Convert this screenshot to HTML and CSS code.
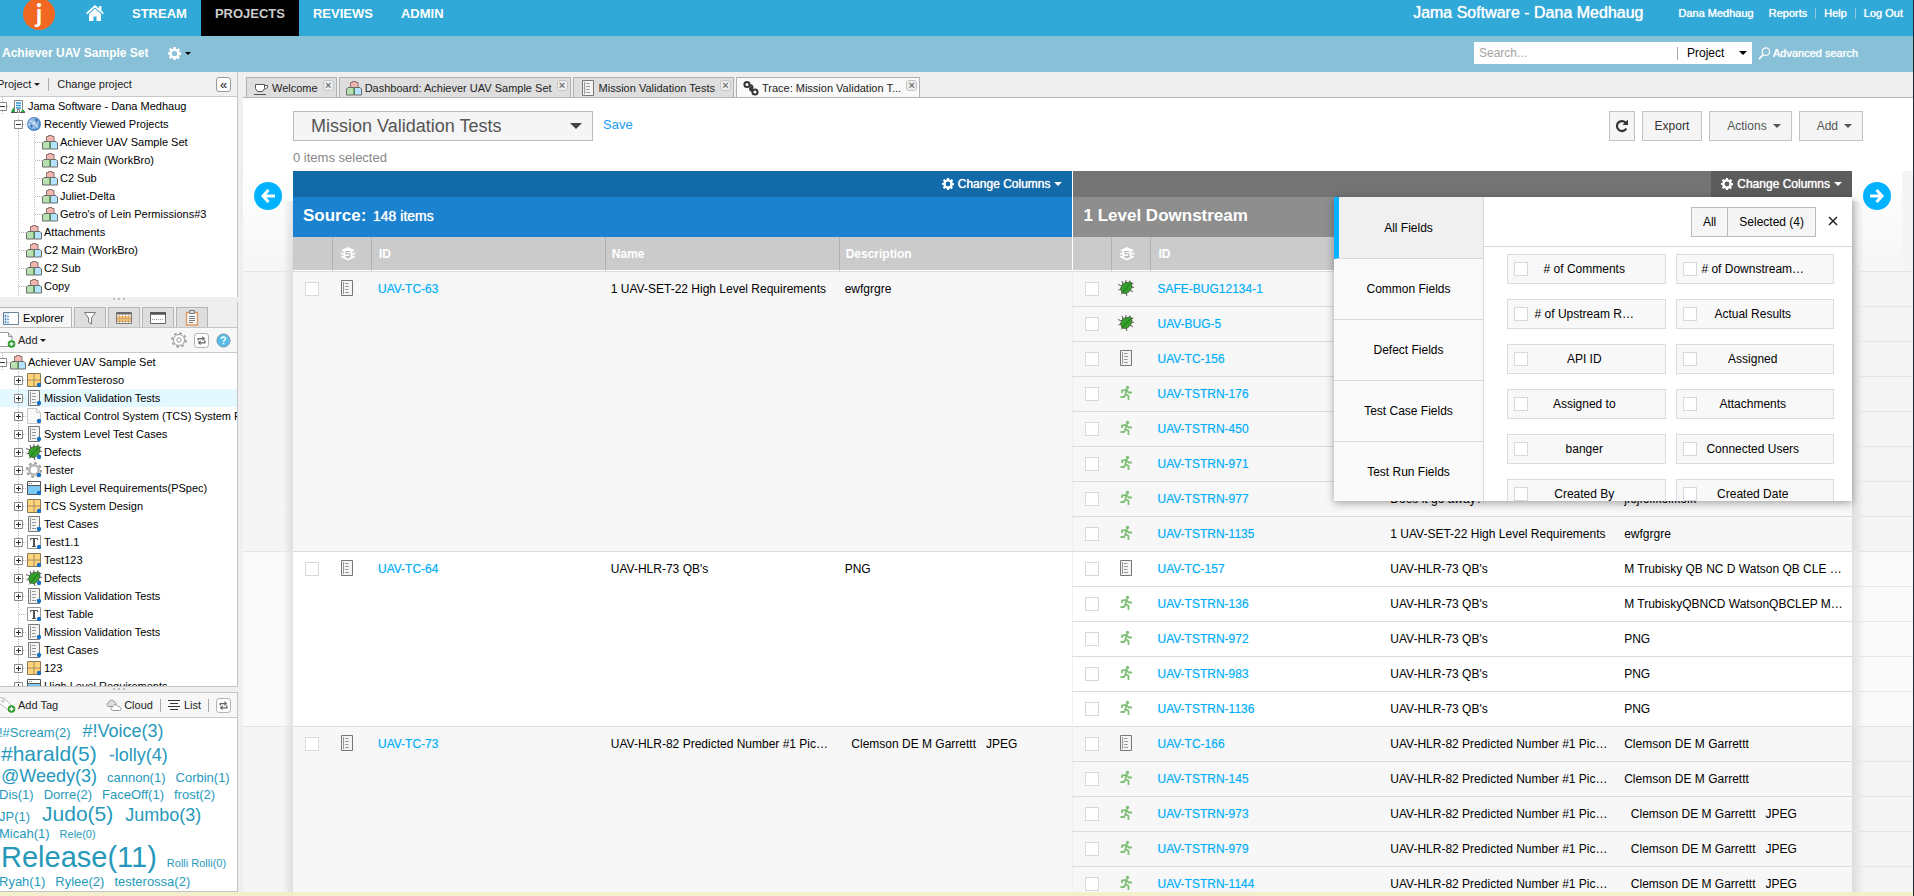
FILE: index.html
```
<!DOCTYPE html>
<html lang="en">
<head>
    <meta charset="UTF-8">
    <meta name="viewport" content="width=device-width, initial-scale=1.0">
    <title>Achiever UAV Sample Set - Trace View</title>
    <link rel="stylesheet" href="styles.css">
</head>
<body>
    <!-- icon sprite -->
    <svg class="sprite" aria-hidden="true">
        <symbol id="i-home" viewBox="0 0 18 16"><path fill="#fff" d="M9 0 0 8l1.200 1.300L9 2.500l7.800 6.800L18 8l-2.600-2.300V1h-2.300v2.600z"/><path fill="#fff" d="M9 3.800 3 9v7h4.500v-4.500h3V16H15V9z"/></symbol>
        <symbol id="i-gear" viewBox="0 0 14 14"><path fill="currentColor" fill-rule="evenodd" d="M5.800 0h2.400l.4 1.900 1.100.5 1.700-1.100 1.600 1.700-1 1.600.4 1.100 1.600.3v2.400l-1.800.3-.5 1.200 1.100 1.600-1.700 1.700-1.600-1.100-1.100.5L8.200 14H5.800l-.4-1.800-1.200-.5-1.600 1.100L1 11.100l1.100-1.600-.5-1.200L0 8V5.800l1.800-.4.4-1.100L1 2.800 2.700 1.200l1.600 1.100 1.100-.5zM7 4.200a2.800 2.800 0 1 0 0 5.600 2.800 2.800 0 0 0 0-5.600z"/></symbol>
        <symbol id="i-search" viewBox="0 0 14 14"><circle cx="8.500" cy="5" r="4" fill="none" stroke="#fff" stroke-width="1.300"/><path stroke="#fff" stroke-width="1.800" d="M5.500 8.200 1 13"/></symbol>
        <symbol id="i-blocks" viewBox="0 0 16 16"><path fill="#f3b6ae" stroke="#8c7270" d="M4.500 8V2.500h2v-1h3.500v1h2V8z"/><path fill="#b9e0b2" stroke="#6b6b6b" d="M.5 15V9L2 7.500h6V15z"/><path fill="#b3e3ff" stroke="#6b6b6b" d="M8.500 15V7.500H14L15.500 9v6z"/><path stroke="#4da24b" d="M8 8v6.500"/></symbol>
        <symbol id="i-building" viewBox="0 0 16 16"><path fill="#fff" stroke="#888" d="M4.500 14V2.500h8V14"/><path stroke="#2a9bd8" stroke-width="1.300" d="M6 5h5M6 7.500h5M6 10h5"/><path fill="#2f9e3c" d="M1 14l2.500-5L5 14zM11 14l1.500-3 3 3z"/><path stroke="#555" d="M1 14.500h14"/><path fill="#fff" stroke="#777" d="M7.500 14.500v-3h2v3"/></symbol>
        <symbol id="i-globe" viewBox="0 0 16 16"><circle cx="8" cy="8" r="7" fill="#4f86c6"/><circle cx="7.500" cy="7.500" r="5.500" fill="#8fb9e3"/><path fill="none" stroke="#e8f2fb" d="M4 4.500l4 2.500 4-3M8 7l-3 4M8 7l4 4.500M2.500 8.500h3"/><path fill="#3769ad" d="M9 2.500l3 1.500-2 3zM4 8l3 1-1.500 3z"/></symbol>
        <symbol id="i-doc" viewBox="0 0 16 16"><path fill="#f4f4f4" stroke="#777" d="M2.500.5h11v15h-11z"/><path stroke="#999" fill="none" d="M4.500 2v12M6 3.500h3.500M6 6.500h4M6 9.500h3.500M6 12.500h4"/></symbol>
        <symbol id="i-page" viewBox="0 0 16 16"><path fill="#f9f9f9" stroke="#c8c8c8" d="M1.500.5h9l4 4v11h-13zM10.500.5v4h4"/></symbol>
        <symbol id="i-grid" viewBox="0 0 16 16"><path fill="#fdd37c" stroke="#8a7a55" d="M1.500 1.500h13v13h-13z"/><path stroke="#a88f5c" d="M8 2v12M2 8h12"/></symbol>
        <symbol id="i-bug" viewBox="0 0 16 16"><path fill="none" stroke="#5a5a5a" d="M5 4 4 1M7.500 3 8 0M11 3.500 12 .500M12.500 4.500l3-1.500M13 7l3 .5M12 10l3 2M4 6 0 4.500M3.500 9l-3 1M5 12.500l-2 2M8 13l1 3"/><path fill="#33a02c" stroke="#47663f" d="M5 3.500l4-1 4-.5 1 4-1.500 4-3.500 3.500-5-.5-1.500-4.500z"/><path stroke="#1e6f1b" d="M5 12 12 4"/></symbol>
        <symbol id="i-cog" viewBox="0 0 16 16"><circle cx="8" cy="8" r="7" fill="none" stroke="#9b9b9b" stroke-width="2" stroke-dasharray="2.750 2.750"/><circle cx="8" cy="8" r="4.700" fill="#fff" stroke="#b5b5b5" stroke-width="2.500"/></symbol>
        <symbol id="i-settings" viewBox="0 0 16 16"><circle cx="8" cy="8" r="7" fill="none" stroke="#999" stroke-width="1.500" stroke-dasharray="2.750 2.750"/><circle cx="8" cy="8" r="5.500" fill="#fff" stroke="#999"/><circle cx="8" cy="8" r="2.200" fill="#fff" stroke="#999"/></symbol>
        <symbol id="i-window" viewBox="0 0 16 16"><path fill="#7ccbf7" stroke="#555" d="M1.500 1.500h13v13h-13z"/><path fill="#fff" d="M2 2h12v3H2z"/><path stroke="#555" d="M2 5.500h12"/><path stroke="#777" stroke-dasharray="1 1" d="M3 3.500h4"/></symbol>
        <symbol id="i-text" viewBox="0 0 16 16"><path fill="#fff" stroke="#999" d="M1.500 1.500h13v13h-13z"/><path fill="none" stroke="#555" stroke-width="2" d="M8 4v8"/><path fill="none" stroke="#555" d="M4.500 6V4.500h7V6M6 12.500h4"/></symbol>
        <symbol id="i-dot" viewBox="0 0 16 16"><circle cx="13" cy="13" r="2.200" fill="#1272c9"/></symbol>
        <symbol id="i-runner" viewBox="0 0 14 16"><circle cx="8.500" cy="2.500" r="1.700" fill="#7fbf77"/><path fill="none" stroke="#7fbf77" stroke-width="1.800" d="M3 8V5.500l4.500-.7L6.500 9l3 2v4M6.500 9.500 5 12H1.500M8 5.500l1.800 2H13"/></symbol>
        <symbol id="i-layers" viewBox="0 0 16 14"><path fill="#fff" d="M8 0l7 3.200L8 6.500 1 3.200zM3.500 4h9v6h-9z"/><path fill="none" stroke="#fff" stroke-width="1.600" d="M1 6.200l2.500 1.100M15 6.200l-2.500 1.100M1 9.300 8 12.700l7-3.400"/><path fill="none" stroke="#b9b9b9" stroke-width="1.200" d="M10.300 4.500H6v2.400h4v2.600H5.500"/></symbol>
        <symbol id="i-cup" viewBox="0 0 16 16"><path fill="#fff" stroke="#555" d="M2.500 4.500h9v4l-2 3h-5l-2-3zM11.500 5.500h3v2l-3 2M1 14.500h12"/></symbol>
        <symbol id="i-chain" viewBox="0 0 16 16"><g fill="none" stroke="#333" stroke-width="2"><circle cx="4" cy="4.500" r="2.600"/><circle cx="12" cy="12" r="2.600"/><path d="M6.500 5.500c3-1 4 2 2 4.200M9.800 10.800c-3 .5-3.600-2-1.800-4"/></g></symbol>
        <symbol id="i-explorer" viewBox="0 0 16 14"><path fill="#fff" stroke="#6b8299" d="M.5 1.500h15v12H.5z"/><path fill="#d9e8f5" d="M1 2h5v11H1z"/><path stroke="#4b7fb4" stroke-dasharray="2 1" d="M2.500 4v8"/><path stroke="#6ba0d4" d="M4 5.500h2M4 8.500h2M4 11.500h2"/></symbol>
        <symbol id="i-funnel" viewBox="0 0 16 16"><path fill="#fff" stroke="#777" d="M2.500 2.500h11l-4 5.500v6l-3-2V8z"/></symbol>
        <symbol id="i-table" viewBox="0 0 16 14"><path fill="#fff" stroke="#777" d="M.5 1.500h15v11H.5z"/><path fill="#ffc069" d="M1 5h14v5H1z"/><path stroke="#666" stroke-width="2" d="M1 2.500h14"/><path stroke="#c9ab80" d="M3.500 4v8M6.500 4v8M9.500 4v8M12.500 4v8M1 7.500h14M1 10.500h14"/></symbol>
        <symbol id="i-pane" viewBox="0 0 16 14"><path fill="#fff" stroke="#666" d="M.5 1.500h15v11H.5z"/><path stroke="#555" stroke-width="2.500" d="M0 2.500h16"/><path stroke="#999" stroke-dasharray="1 1" d="M2 8.500h12"/></symbol>
        <symbol id="i-clip" viewBox="0 0 14 16"><path fill="#fff" stroke="#e09a62" stroke-width="1.500" d="M1.500 2.500h11v12.500h-11z"/><path fill="#ddd" stroke="#777" d="M4.500.5h5v3h-5z"/><path stroke="#777" d="M4 6.500h6M4 8.500h6M4 10.500h6M4 12.500h4"/></symbol>
        <symbol id="i-add" viewBox="0 0 16 16"><path fill="#fff" stroke="#999" d="M-1 .5h9l4 4v10H-1zM8.500.5v4h4"/><circle cx="11.500" cy="12" r="3.800" fill="#2f9e2f"/><path stroke="#fff" stroke-width="1.300" d="M9.500 12h4M11.500 10v4"/></symbol>
        <symbol id="i-tag" viewBox="0 0 16 16"><path fill="#fff" stroke="#bbb" d="M-1 .5 4 1l9 9-3 4L-1 6z"/><circle cx="3" cy="4" r="1.300" fill="none" stroke="#bbb"/><circle cx="11.500" cy="12" r="3.800" fill="#2f9e2f"/><path stroke="#fff" stroke-width="1.300" d="M9.500 12h4M11.500 10v4"/></symbol>
        <symbol id="i-swap" viewBox="0 0 16 16"><rect x=".5" y=".5" width="15" height="15" rx="3" fill="#fff" stroke="#aaa"/><path fill="none" stroke="#666" stroke-width="1.500" d="M4.500 8V6h5M11.500 8v2.500h-5"/><path fill="#666" d="M9 3.200 12 6 9 8.500zM7 7.500v5.500l-3-2.600z"/></symbol>
        <symbol id="i-help" viewBox="0 0 16 16"><circle cx="8" cy="8" r="7" fill="#55bdea" stroke="#7c98a6"/><path fill="none" stroke="#fff" stroke-width="1.600" d="M5.800 6.500c0-3 4.400-3 4.400-.4 0 1.600-2.200 1.600-2.200 3.200M8 10.500v1.600"/></symbol>
        <symbol id="i-clouds" viewBox="0 0 16 12"><path fill="#ddd" stroke="#999" d="M2 7.500C0 6 1 4 2.500 4 3 1 7 0 8.500 3c2 0 2 2 1 4.500z"/><path fill="#fff" stroke="#999" d="M7 11.500c-2.500 0-2.500-3-.5-3.300C7 5 11 5 12 7.500c3-.3 4.500 4 1.500 4z"/></symbol>
        <symbol id="i-list" viewBox="0 0 12 12"><path stroke="#333" d="M0 1.500h12M2 4.500h8M0 7.500h12M2 10.500h8"/></symbol>
        <symbol id="i-left" viewBox="0 0 28 28"><circle cx="14" cy="14" r="14" fill="#00b2ff"/><path fill="none" stroke="#fff" stroke-width="3" d="M14.500 8 9 14l5.500 6M9 14h12"/></symbol>
        <symbol id="i-right" viewBox="0 0 28 28"><circle cx="14" cy="14" r="14" fill="#00b2ff"/><path fill="none" stroke="#fff" stroke-width="3" d="M13.500 8 19 14l-5.500 6M19 14H7"/></symbol>
        <symbol id="i-reload" viewBox="0 0 14 14"><path fill="none" stroke="#333" stroke-width="2.200" d="M11.300 9.500A5 5 0 1 1 10.500 3.500"/><path fill="#333" d="M13 .5v5.500H7.500z"/></symbol>
        <symbol id="t-plus" viewBox="0 0 16 18"><path stroke="#bbb" stroke-dasharray="1 1" d="M8.500 0v18M13 9.500h3"/><path fill="#fff" stroke="#888" d="M4.500 5.500h8v8h-8z"/><path stroke="#333" d="M6 9.500h5M8.500 7v5"/></symbol>
        <symbol id="t-minus" viewBox="0 0 16 18"><path stroke="#bbb" stroke-dasharray="1 1" d="M8.500 0v18M13 9.500h3"/><path fill="#fff" stroke="#888" d="M4.500 5.500h8v8h-8z"/><path stroke="#333" d="M6 9.500h5"/></symbol>
        <symbol id="t-leaf" viewBox="0 0 16 18"><path stroke="#bbb" stroke-dasharray="1 1" d="M8.500 0v18M9 9.500h7"/></symbol>
        <symbol id="t-line" viewBox="0 0 16 18"><path stroke="#bbb" stroke-dasharray="1 1" d="M8.500 0v18"/></symbol>
    </svg>

    <header class="topbar">
        <a class="logo" href="#" aria-label="Jama">j</a>
        <nav class="main-nav">
            <a class="home" href="#" aria-label="Home"><svg width="18" height="16"><use href="#i-home"/></svg></a>
            <a href="#">STREAM</a>
            <a class="active" href="#">PROJECTS</a>
            <a href="#">REVIEWS</a>
            <a href="#">ADMIN</a>
        </nav>
        <div class="account">
            <span class="org">Jama Software - Dana Medhaug</span>
            <a class="user" href="#">Dana Medhaug</a>
            <a href="#">Reports</a><i></i>
            <a href="#">Help</a><i></i>
            <a href="#">Log Out</a>
        </div>
    </header>

    <div class="subbar">
        <strong>Achiever UAV Sample Set</strong>
        <button class="project-menu" aria-label="Project settings"><svg width="13" height="13"><use href="#i-gear"/></svg><span class="caret small"></span></button>
        <form class="search">
            <input type="text" placeholder="Search..." aria-label="Search">
            <select aria-label="Search scope"><option>Project</option></select>
            <span class="caret"></span>
        </form>
        <a class="advanced" href="#"><svg width="13" height="13"><use href="#i-search"/></svg>Advanced search</a>
    </div>

    <div class="workspace">
        <aside class="sidebar">
            <section class="panel projects">
                <div class="toolbar">
                    <button class="clipped">Project<span class="caret small"></span></button><i></i>
                    <button>Change project</button>
                    <button class="collapse" aria-label="Collapse">«</button>
                </div>
                <ul class="tree" id="project-tree"></ul>
            </section>
            <div class="splitter"></div>
            <section class="panel explorer">
                <div class="side-tabs">
                    <button class="active"><svg width="16" height="14"><use href="#i-explorer"/></svg>Explorer</button>
                    <button aria-label="Filters"><svg width="16" height="16"><use href="#i-funnel"/></svg></button>
                    <button aria-label="Releases"><svg width="16" height="14"><use href="#i-table"/></svg></button>
                    <button aria-label="Baselines"><svg width="16" height="14"><use href="#i-pane"/></svg></button>
                    <button aria-label="Test plans"><svg width="14" height="16"><use href="#i-clip"/></svg></button>
                </div>
                <div class="toolbar">
                    <button class="with-icon"><svg width="16" height="16"><use href="#i-add"/></svg>Add<span class="caret small"></span></button>
                    <button class="push" aria-label="Settings"><svg width="16" height="16"><use href="#i-settings"/></svg></button>
                    <button aria-label="Refresh"><svg width="15" height="15"><use href="#i-swap"/></svg></button>
                    <button aria-label="Help"><svg width="15" height="15"><use href="#i-help"/></svg></button>
                </div>
                <ul class="tree" id="explorer-tree"></ul>
            </section>
            <div class="splitter"></div>
            <section class="panel tags">
                <div class="toolbar">
                    <button class="with-icon"><svg width="16" height="16"><use href="#i-tag"/></svg>Add Tag</button>
                    <button class="with-icon push"><svg width="16" height="12"><use href="#i-clouds"/></svg>Cloud</button><i></i>
                    <button class="with-icon list"><svg width="12" height="12"><use href="#i-list"/></svg>List</button><i></i>
                    <button aria-label="Refresh tags"><svg width="15" height="15"><use href="#i-swap"/></svg></button>
                </div>
                <div class="cloud">
                    <p><a href="#">!#Scream(2)</a><a class="t3" href="#">#!Voice(3)</a></p>
                    <p><a class="t4" href="#">#harald(5)</a><a class="t3" href="#">-lolly(4)</a></p>
                    <p><a class="t3" href="#">@Weedy(3)</a><a href="#">cannon(1)</a><a href="#">Corbin(1)</a></p>
                    <p><a href="#">Dis(1)</a><a href="#">Dorre(2)</a><a href="#">FaceOff(1)</a><a href="#">frost(2)</a></p>
                    <p><a href="#">JP(1)</a><a class="t4" href="#">Judo(5)</a><a class="t3" href="#">Jumbo(3)</a></p>
                    <p><a href="#">Micah(1)</a><a class="t1" href="#">Rele(0)</a></p>
                    <p><a class="t5" href="#">Release(11)</a><a class="t1" href="#">Rolli Rolli(0)</a></p>
                    <p><a href="#">Ryah(1)</a><a href="#">Rylee(2)</a><a href="#">testerossa(2)</a></p>
                </div>
            </section>
        </aside>

        <main class="main">
            <div class="tabs">
                <div class="tab"><svg width="16" height="16"><use href="#i-cup"/></svg><a href="#">Welcome</a><button aria-label="Close">×</button></div>
                <div class="tab"><svg width="16" height="16"><use href="#i-blocks"/></svg><a href="#">Dashboard: Achiever UAV Sample Set</a><button aria-label="Close">×</button></div>
                <div class="tab"><svg width="16" height="16"><use href="#i-doc"/></svg><a href="#">Mission Validation Tests</a><button aria-label="Close">×</button></div>
                <div class="tab active"><svg width="16" height="16"><use href="#i-chain"/></svg><a href="#">Trace: Mission Validation T...</a><button aria-label="Close">×</button></div>
            </div>

            <div class="actions">
                <div class="view-select">
                    <select aria-label="Saved view"><option>Mission Validation Tests</option></select>
                    <span class="caret big"></span>
                </div>
                <a class="save" href="#">Save</a>
                <div class="buttons">
                    <button class="btn reload" aria-label="Reload"><svg width="14" height="14"><use href="#i-reload"/></svg></button>
                    <button class="btn">Export</button>
                    <button class="btn menu">Actions<span class="caret"></span></button>
                    <button class="btn menu">Add<span class="caret"></span></button>
                </div>
            </div>
            <div class="selected">0 items selected</div>

            <table class="trace">
                <colgroup>
                    <col class="gutter-l"><col class="tick"><col class="tick"><col><col><col>
                    <col class="tick"><col class="tick"><col><col><col><col class="gutter-r">
                </colgroup>
                <thead>
                    <tr class="strip">
                        <td class="gutter left" rowspan="3"><button aria-label="Previous level"><svg width="28" height="28"><use href="#i-left"/></svg></button></td>
                        <td class="source" colspan="5">
                            <div class="columns"><button class="change"><svg width="12" height="12"><use href="#i-gear"/></svg>Change Columns<span class="caret"></span></button></div>
                        </td>
                        <td class="down" colspan="5">
                            <div class="columns">
                                <button class="change open"><svg width="12" height="12"><use href="#i-gear"/></svg>Change Columns<span class="caret"></span></button>
                                <div class="popup">
                                    <div class="groups">
                                        <button class="active">All Fields</button>
                                        <button>Common Fields</button>
                                        <button>Defect Fields</button>
                                        <button>Test Case Fields</button>
                                        <button>Test Run Fields</button>
                                    </div>
                                    <div class="picker">
                                        <div class="picker-head">
                                            <button>All</button><button>Selected (4)</button>
                                            <button class="close" aria-label="Close"><svg width="10" height="10" viewBox="0 0 10 10"><path stroke="#222" stroke-width="1.500" d="M1 1l8 8M9 1 1 9"/></svg></button>
                                        </div>
                                        <div class="fields" id="fields"></div>
                                    </div>
                                </div>
                            </div>
                        </td>
                        <td class="gutter right" rowspan="3"><button aria-label="Next level"><svg width="28" height="28"><use href="#i-right"/></svg></button></td>
                    </tr>
                    <tr class="titles">
                        <th class="source" colspan="5">Source: <span>148 items</span></th>
                        <th class="down" colspan="5">1 Level Downstream</th>
                    </tr>
                    <tr class="heads">
                        <th></th><th class="type"><svg width="16" height="14"><use href="#i-layers"/></svg></th><th>ID</th><th class="text">Name</th><th class="text">Description</th>
                        <th class="down"></th><th class="type"><svg width="16" height="14"><use href="#i-layers"/></svg></th><th>ID</th><th class="text">Name</th><th class="text">Description</th>
                    </tr>
                </thead>
                <tbody id="trace-rows"></tbody>
            </table>
        </main>
    </div>
    <div class="footer"></div>

    <script>
        // [level, expander, icon, label]
        const projects = [
            [0, 'minus', 'building', 'Jama Software - Dana Medhaug'],
            [1, 'minus', 'globe', 'Recently Viewed Projects'],
            [2, 'leaf', 'blocks', 'Achiever UAV Sample Set'],
            [2, 'leaf', 'blocks', 'C2 Main (WorkBro)'],
            [2, 'leaf', 'blocks', 'C2 Sub'],
            [2, 'leaf', 'blocks', 'Juliet-Delta'],
            [2, 'leaf', 'blocks', "Getro's of Lein Permissions#3"],
            [1, 'leaf', 'blocks', 'Attachments'],
            [1, 'leaf', 'blocks', 'C2 Main (WorkBro)'],
            [1, 'leaf', 'blocks', 'C2 Sub'],
            [1, 'leaf', 'blocks', 'Copy'],
            [1, 'leaf', 'blocks', '']
        ];
        const explorer = [
            [0, 'minus', 'blocks', 'Achiever UAV Sample Set'],
            [1, 'plus', 'grid', 'CommTesteroso'],
            [1, 'plus', 'doc', 'Mission Validation Tests', true],
            [1, 'plus', 'page', 'Tactical Control System (TCS) System Requirements'],
            [1, 'plus', 'doc', 'System Level Test Cases'],
            [1, 'plus', 'bug', 'Defects'],
            [1, 'plus', 'cog', 'Tester'],
            [1, 'plus', 'window', 'High Level Requirements(PSpec)'],
            [1, 'plus', 'grid', 'TCS System Design'],
            [1, 'plus', 'doc', 'Test Cases'],
            [1, 'plus', 'text', 'Test1.1'],
            [1, 'plus', 'grid', 'Test123'],
            [1, 'plus', 'bug', 'Defects'],
            [1, 'plus', 'doc', 'Mission Validation Tests'],
            [1, 'leaf', 'text', 'Test Table'],
            [1, 'plus', 'doc', 'Mission Validation Tests'],
            [1, 'plus', 'doc', 'Test Cases'],
            [1, 'plus', 'grid', '123'],
            [1, 'plus', 'window', 'High Level Requirements']
        ];
        const hlr82 = 'UAV-HLR-82 Predicted Number #1 Pic…';
        const qbs = "UAV-HLR-73 QB's";
        const garrett = '  Clemson DE M Garrettt   JPEG';
        const traces = [
            {
                source: ['doc', 'UAV-TC-63', '1 UAV-SET-22 High Level Requirements', 'ewfgrgre'],
                down: [
                    ['bug', 'SAFE-BUG12134-1', '', ''],
                    ['bug', 'UAV-BUG-5', '', ''],
                    ['doc', 'UAV-TC-156', '', ''],
                    ['runner', 'UAV-TSTRN-176', '', ''],
                    ['runner', 'UAV-TSTRN-450', '', ''],
                    ['runner', 'UAV-TSTRN-971', '', ''],
                    ['runner', 'UAV-TSTRN-977', 'Does it go away?', 'jfojfoifkoifkofk'],
                    ['runner', 'UAV-TSTRN-1135', '1 UAV-SET-22 High Level Requirements', 'ewfgrgre']
                ]
            },
            {
                source: ['doc', 'UAV-TC-64', qbs, 'PNG'],
                down: [
                    ['doc', 'UAV-TC-157', qbs, 'M Trubisky QB NC D Watson QB CLE …'],
                    ['runner', 'UAV-TSTRN-136', qbs, 'M TrubiskyQBNCD WatsonQBCLEP M…'],
                    ['runner', 'UAV-TSTRN-972', qbs, 'PNG'],
                    ['runner', 'UAV-TSTRN-983', qbs, 'PNG'],
                    ['runner', 'UAV-TSTRN-1136', qbs, 'PNG']
                ]
            },
            {
                source: ['doc', 'UAV-TC-73', hlr82, garrett],
                down: [
                    ['doc', 'UAV-TC-166', hlr82, 'Clemson DE M Garrettt'],
                    ['runner', 'UAV-TSTRN-145', hlr82, 'Clemson DE M Garrettt'],
                    ['runner', 'UAV-TSTRN-973', hlr82, garrett],
                    ['runner', 'UAV-TSTRN-979', hlr82, garrett],
                    ['runner', 'UAV-TSTRN-1144', hlr82, garrett]
                ]
            }
        ];
        const fields = ['# of Comments', '# of Downstream…', '# of Upstream R…', 'Actual Results', 'API ID', 'Assigned',
            'Assigned to', 'Attachments', 'banger', 'Connected Users', 'Created By', 'Created Date'];

        function svg(id, w, h) {
            return `<svg width="${w}" height="${h}"><use href="#${id}"/></svg>`;
        }

        function renderTree(id, items, dots) {
            document.getElementById(id).innerHTML = items.map(([level, expander, icon, label, selected]) => {
                let pad = '';
                if (level > 0) pad += '<span class="slot"></span>';
                if (level > 1) pad += svg('t-line', 16, 18);
                const dot = dots && level > 0 ? '<use href="#i-dot"/>' : '';
                return `<li class="${selected ? 'selected-item' : ''}">${pad}${svg('t-' + expander, 16, 18)}` +
                    `<svg width="16" height="16"><use href="#i-${icon}"/>${dot}</svg><a href="#">${label}</a></li>`;
            }).join('');
        }

        function cells(item, span, side) {
            const [icon, key, name, desc] = item;
            return `<td class="${side} check" rowspan="${span}"><input type="checkbox" aria-label="Select ${key}"></td>
                <td class="type" rowspan="${span}">${svg('i-' + icon, 16, 16)}</td>
                <td rowspan="${span}"><a href="#">${key}</a></td>
                <td class="text" rowspan="${span}">${name}</td>
                <td class="text" rowspan="${span}">${desc}</td>`;
        }

        function renderTraces() {
            let html = '';
            traces.forEach((group, g) => {
                const n = group.down.length;
                group.down.forEach((item, i) => {
                    html += `<tr class="${g % 2 ? 'even' : 'odd'}">`;
                    if (i === 0) {
                        html += `<td class="gutter left" rowspan="${n}"></td>` + cells(group.source, n, 'src');
                    }
                    html += cells(item, 1, 'down') + '<td class="gutter right"></td></tr>';
                });
            });
            document.getElementById('trace-rows').innerHTML = html;
        }

        renderTree('project-tree', projects, false);
        renderTree('explorer-tree', explorer, true);
        renderTraces();
        document.getElementById('fields').innerHTML = fields
            .map(f => `<label><input type="checkbox"><span>${f}</span></label>`).join('');
    </script>
</body>
</html>
```

FILE: styles.css
```
* {
    box-sizing: border-box;
}

body {
    margin: 0;
    height: 100vh;
    display: flex;
    flex-direction: column;
    overflow: hidden;
    border-right: 1px solid #20262b;
    font-family: "Liberation Sans", Arial, sans-serif;
    font-size: 12px;
    color: #000;
    background: #fff;
}

button, input, select {
    font: inherit;
    color: inherit;
    margin: 0;
}

button {
    padding: 0;
    border: 0;
    background: none;
    cursor: pointer;
}

a {
    color: inherit;
    text-decoration: none;
}

svg {
    flex: none;
}

.sprite {
    position: absolute;
    width: 0;
    height: 0;
}

.caret {
    flex: none;
    display: inline-block;
    border: 4px solid transparent;
    border-top-color: currentColor;
    border-bottom: 0;
}

.caret.small {
    border-width: 3px;
    border-bottom: 0;
}

.caret.big {
    border-width: 6px;
    border-bottom: 0;
}

/* top bars */
.topbar {
    flex: none;
    display: flex;
    height: 36px;
    background: #31a9d8;
    color: #fff;
}

.logo {
    width: 32px;
    height: 32px;
    margin: -2px 17px 0 23px;
    border-radius: 50%;
    background: #f26722;
    font: bold 26px/31px Lato, "Liberation Sans", sans-serif;
    text-align: center;
}

.main-nav {
    display: flex;
    font-size: 13px;
    font-weight: bold;
    line-height: 27px;
}

.main-nav a {
    padding: 0 14px;
}

.main-nav .home {
    padding-top: 5px;
    line-height: 0;
}

.main-nav .active {
    background: #000;
    color: #ccc;
}

.account {
    display: flex;
    margin-left: auto;
    padding-right: 10px;
    font-size: 11px;
    line-height: 27px;
    text-shadow: 0 0 1px #fff;
}

.account .org {
    font-size: 16px;
    line-height: 25px;
    margin-right: 35px;
}

.account .user {
    margin-right: 15px;
}

.account i, .toolbar i {
    width: 1px;
    height: 11px;
    margin: 8px 8px 0;
    background: #8fc9e2;
}

.subbar {
    flex: none;
    display: flex;
    align-items: center;
    height: 36px;
    padding: 0 55px 2px 2px;
    background: #88c1d7;
    color: #fff;
}

.project-menu {
    display: flex;
    align-items: center;
    gap: 4px;
    margin-left: 19px;
}

.project-menu .caret {
    color: #000;
}

.search {
    display: flex;
    align-items: center;
    width: 278px;
    height: 22px;
    margin: 0 6px 0 auto;
    padding: 0 5px;
    background: #fff;
    color: #000;
}

.search input {
    flex: 1;
    min-width: 0;
    padding: 0;
    border: 0;
    outline: 0;
}

.search input::placeholder {
    color: #a5a5a5;
}

.search select {
    width: 62px;
    padding: 0 0 0 9px;
    border: 0;
    border-left: 1px solid #aaa;
    background: none;
    appearance: none;
    line-height: 13px;
}

.advanced {
    display: flex;
    align-items: center;
    gap: 2px;
    font-size: 11px;
    text-shadow: 0 0 1px #fff;
}

/* left column */
.workspace {
    flex: 1;
    display: flex;
    min-height: 0;
}

.footer {
    flex: none;
    height: 4px;
    background: #f3eecb;
}

.sidebar {
    flex: none;
    display: flex;
    flex-direction: column;
    width: 243px;
    padding-right: 5px;
    background: #efefef;
    font-size: 11px;
}

.panel {
    display: flex;
    flex-direction: column;
    min-height: 0;
    overflow: hidden;
    border-right: 1px solid #c4c4c4;
    background: #fff;
}

.projects {
    flex: none;
    height: 225px;
}

.explorer {
    flex: 1;
    border-bottom: 1px solid #c4c4c4;
}

.tags {
    flex: none;
    height: 200px;
    border-top: 1px solid #c4c4c4;
    border-bottom: 1px solid #c4c4c4;
}

.splitter {
    flex: none;
    height: 5px;
    background: #efefef;
}

.splitter::after {
    content: "";
    display: block;
    width: 12px;
    height: 2px;
    margin: 1px auto;
    background: repeating-linear-gradient(90deg, #bbb 0 2px, transparent 2px 5px);
}

.toolbar {
    flex: none;
    display: flex;
    align-items: center;
    gap: 7px;
    height: 25px;
    padding-right: 6px;
    border-bottom: 1px solid #c9c9c9;
    background: #f7f7f7;
    color: #222;
}

.projects .toolbar {
    gap: 8px;
    background: #f0f0f0;
}

.toolbar button {
    display: flex;
    align-items: center;
    gap: 3px;
}

.toolbar .clipped {
    margin-left: -3px;
}

.toolbar .with-icon {
    gap: 2px;
}

.toolbar .list {
    gap: 4px;
}

.toolbar i {
    height: 13px;
    margin: 0;
    background: #aaa;
}

.toolbar .push {
    margin-left: auto;
}

.toolbar .collapse {
    width: 15px;
    height: 15px;
    margin-left: auto;
    border: 1px solid #999;
    border-radius: 3px;
    background: #fff;
    justify-content: center;
    font-size: 13px;
    line-height: 11px;
}

.side-tabs {
    flex: none;
    display: flex;
    align-items: flex-end;
    gap: 2px;
    height: 26px;
    border-bottom: 1px solid #c4c4c4;
    background: #efefef;
}

.side-tabs button {
    display: flex;
    align-items: center;
    justify-content: center;
    gap: 4px;
    width: 32px;
    height: 20px;
    border: 1px solid #b5b5b5;
    border-bottom: 0;
    background: #dedede;
}

.side-tabs .active {
    width: 72px;
    padding-right: 4px;
    border-left: 0;
    background: #f7f7f7;
}

.tree {
    flex: 1;
    min-height: 0;
    margin: 0 0 0 -6px;
    padding: 0;
    overflow: hidden;
    list-style: none;
}

.tree li {
    display: flex;
    align-items: center;
    height: 18px;
    white-space: nowrap;
}

.tree a {
    margin-left: 2px;
}

.slot {
    flex: none;
    width: 16px;
}

.selected-item {
    background: #e4f8ff;
}

.cloud {
    padding-top: 3px;
    overflow: hidden;
    font-size: 13px;
    color: #2699bb;
}

.cloud p {
    display: flex;
    align-items: baseline;
    gap: 10px;
    margin: 0 0 0 -1px;
    white-space: nowrap;
}

.t1 { font-size: 11px; }
.t3 { font-size: 18px; }
.t4 { font-size: 21px; }
.t5 { font-size: 29px; margin-left: 2px; }

.t3, .t4 {
    margin-left: 2px;
}

/* main area */
.main {
    flex: 1;
    min-width: 0;
    overflow: hidden;
}

.tabs {
    display: flex;
    align-items: flex-end;
    gap: 2px;
    height: 26px;
    padding-left: 3px;
    border-bottom: 1px solid #b5b5b5;
    background: #efefef;
    font-size: 11px;
}

.tab {
    display: flex;
    align-items: center;
    height: 20px;
    padding: 0 2px 0 6px;
    border: 1px solid #b0b0b0;
    border-bottom: 0;
    background: #dedede;
    color: #222;
}

.tab.active {
    background: #f9f9f9;
}

.tab a {
    margin: 0 5px 0 3px;
}

.tab button {
    width: 11px;
    height: 11px;
    margin-bottom: 4px;
    border: 1px solid #c4c4c4;
    border-radius: 3px;
    background: #eee;
    color: #777;
    font: bold 11px/9px "Liberation Sans", sans-serif;
}

.actions {
    display: flex;
    height: 43px;
    padding: 13px 50px 0 50px;
}

.view-select {
    display: flex;
    align-items: center;
    width: 300px;
    height: 30px;
    padding-right: 10px;
    border: 1px solid #bbb;
    background: #f5f5f5;
    color: #444;
}

.view-select select {
    flex: 1;
    padding: 0 0 0 17px;
    border: 0;
    background: none;
    appearance: none;
    font-size: 18px;
    color: #555;
}

.save {
    margin-left: 10px;
    font-size: 13px;
    line-height: 27px;
    color: #1c9cf2;
}

.buttons {
    display: flex;
    gap: 7px;
    margin-left: auto;
}

.btn {
    display: flex;
    align-items: center;
    gap: 6px;
    height: 30px;
    padding: 0 12px;
    border: 1px solid #c4c4c4;
    background: #f5f5f5;
    color: #333;
}

.btn.reload {
    padding: 0 5px;
}

.btn.menu {
    padding: 0 10px 0 17px;
    color: #555;
}

.selected {
    height: 30px;
    padding-left: 50px;
    font-size: 13px;
    line-height: 33px;
    color: #888;
}

.trace {
    width: 100%;
    table-layout: fixed;
    border-spacing: 0;
    text-align: left;
}

.gutter-l { width: 50px; }
.gutter-r { width: 61px; }
.tick { width: 39px; }

.trace td, .trace th {
    padding: 0;
}

.strip td {
    height: 26px;
}

.strip .source { background: #126aa9; }
.strip .down { background: #747474; }
.titles .source { background: #1b82cf; }
.titles .down { background: #8e8e8e; }

.trace .down {
    border-left: 1px solid #fff;
}

.columns {
    position: relative;
    display: flex;
    justify-content: flex-end;
}

.change {
    display: flex;
    align-items: center;
    gap: 4px;
    height: 26px;
    padding: 0 10px;
    color: #fff;
    text-shadow: 0 0 1px #fff;
}

.change.open {
    background: #5c5c5c;
}

.trace .titles th {
    height: 40px;
    padding: 0 0 3px 10px;
    font-size: 17px;
    color: #fff;
}

.titles span {
    margin-left: 2px;
    font-size: 14px;
    font-weight: normal;
    text-shadow: 0 0 1px #fff;
}

.trace .heads th {
    height: 34px;
    padding-left: 7px;
    border-left: 1px solid #b0b0b0;
    border-bottom: 1px solid #fff;
    background: #cbcbcb;
    color: #fff;
}

.trace .heads .text {
    padding-left: 6px;
}

.trace .heads th:nth-child(1) {
    border-left-color: #cbcbcb;
}

.trace .heads .down {
    border-left-color: #fff;
}

.trace .heads .type {
    padding: 4px 9px 0 0;
}

.trace tbody td {
    height: 35px;
    padding-left: 7px;
    border-top: 1px solid #d6dfdf;
    vertical-align: top;
    line-height: 34px;
    white-space: pre;
    overflow: hidden;
}

.trace tbody .text {
    padding-left: 6px;
}

.odd td { background: #f7f7f7; }
.even td { background: #fff; }

.trace tbody .down {
    border-left-color: #f0f0f0;
}

.trace tbody .check {
    padding-left: 12px;
    line-height: 0;
    padding-top: 10px;
}

.trace tbody .type {
    padding: 8px 9px 0 0;
    line-height: 0;
}

.trace .type {
    text-align: center;
}

tbody a {
    color: #00adf8;
    text-shadow: 0 0 1px #9fdcfb;
}

input[type="checkbox"] {
    appearance: none;
    flex: none;
    width: 14px;
    height: 14px;
    border: 1px solid #d8d8d8;
    background: #fff;
}

.trace thead .gutter {
    padding-top: 11px;
    vertical-align: top;
    text-align: center;
    line-height: 0;
}

.trace thead .left {
    background: linear-gradient(90deg, transparent 80%, rgba(0, 0, 0, .1)) 0 30px no-repeat, linear-gradient(#fff, #f6f6f6);
}

.trace thead .right {
    padding-left: 11px;
    text-align: left;
    background: linear-gradient(270deg, transparent 80%, rgba(0, 0, 0, .1)) 0 30px no-repeat, linear-gradient(270deg, #f5f5f5 11px, transparent 11px), linear-gradient(#fff, #f6f6f6);
}

.trace tbody .gutter {
    border-top-color: #e4e6e6;
}

.trace .odd .left { background: linear-gradient(90deg, #f5f5f5 80%, #dedede); }
.trace .even .left { background: linear-gradient(90deg, #fafafa 80%, #e2e2e2); }
.trace .odd .right { background: linear-gradient(270deg, #f5f5f5 80%, #dcdcdc); }
.trace .even .right { background: linear-gradient(270deg, #fafafa 80%, #e0e0e0); }

/* column picker */
.popup {
    position: absolute;
    z-index: 2;
    top: 26px;
    right: 0;
    display: flex;
    width: 518px;
    height: 304px;
    background: #fff;
    box-shadow: 0 2px 8px rgba(0, 0, 0, .35);
    overflow: hidden;
}

.groups {
    width: 150px;
    border-right: 1px solid #d8d8d8;
    background: #fafafa;
}

.groups button {
    display: block;
    width: 100%;
    height: 61px;
    border-bottom: 1px solid #d8d8d8;
}

.groups .active {
    height: 62px;
    border-left: 5px solid #00b2ff;
    padding-right: 5px;
    background: #f0f0f0;
}

.picker {
    flex: 1;
}

.picker-head {
    display: flex;
    height: 50px;
    padding: 10px 14px 0;
    border-bottom: 1px solid #d8d8d8;
    justify-content: flex-end;
}

.picker-head button {
    height: 30px;
    padding: 0 11px;
    border: 1px solid #bbb;
    background: #f5f5f5;
}

.picker-head button + button {
    border-left: 0;
}

.picker-head .close {
    padding: 0;
    margin-left: 12px;
    border: 0;
    background: none;
}

.fields {
    display: grid;
    grid-template-columns: 1fr 1fr;
    gap: 15px 10px;
    padding: 7px 18px 0 23px;
}

.fields label {
    display: flex;
    align-items: center;
    height: 30px;
    padding: 0 24px 0 6px;
    border: 1px solid #dcdcdc;
    background: #f8f8f8;
    white-space: nowrap;
}

.fields span {
    flex: 1;
    text-align: center;
}
```
